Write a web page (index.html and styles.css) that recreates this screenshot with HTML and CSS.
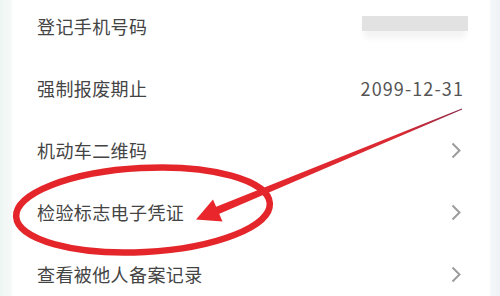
FILE: index.html
```html
<!DOCTYPE html>
<html lang="zh-CN">
<head>
  <meta charset="UTF-8" />
  <title>机动车信息</title>
  <link rel="stylesheet" href="styles.css">
</head>
<body>
  <div class="page">
    <div class="edge edge-left"></div>
    <div class="card">
      <ul class="list">
        <li class="row">
          <span class="label">登记手机号码</span>
          <span class="masked"></span>
        </li>
        <li class="row">
          <span class="label">强制报废期止</span>
          <span class="value">2099-12-31</span>
        </li>
        <li class="row">
          <span class="label">机动车二维码</span>
          <svg class="chevron" width="10" height="17" viewBox="0 0 10 17"><path d="M1.5 1.5 L8.5 8.5 L1.5 15.5" /></svg>
        </li>
        <li class="row">
          <span class="label">检验标志电子凭证</span>
          <svg class="chevron" width="10" height="17" viewBox="0 0 10 17"><path d="M1.5 1.5 L8.5 8.5 L1.5 15.5" /></svg>
        </li>
        <li class="row">
          <span class="label">查看被他人备案记录</span>
          <svg class="chevron" width="10" height="17" viewBox="0 0 10 17"><path d="M1.5 1.5 L8.5 8.5 L1.5 15.5" /></svg>
        </li>
      </ul>
    </div>
    <div class="edge edge-right"></div>

    <!-- 红色标注 -->
    <svg class="mark" width="500" height="296" viewBox="0 0 500 296">
      <defs>
        <linearGradient id="shaft" x1="216" y1="211" x2="462" y2="109" gradientUnits="userSpaceOnUse">
          <stop offset="0" stop-color="#e8262b" />
          <stop offset="0.75" stop-color="#d92a33" />
          <stop offset="1" stop-color="#8a2c4a" />
        </linearGradient>
      </defs>
      <ellipse cx="143" cy="210" rx="127" ry="42" transform="rotate(-3 143 210)"
               fill="none" stroke="#e4262b" stroke-width="6.5" />
      <polygon points="214.3,207.5 461.8,108.5 462.2,109.5 217.7,214.5" fill="url(#shaft)" />
      <polygon points="196,219.5 213,199.5 222.5,221.5" fill="#e8262b" />
    </svg>
  </div>
</body>
</html>
```

FILE: styles.css
```css
body { margin: 0; font-family: "Noto Sans CJK SC", "Noto Sans", sans-serif; background: #fff; }
.page { position: relative; display: flex; width: 500px; height: 296px; overflow: hidden; }
.edge { flex: none; }
.edge-left { width: 12px; background: linear-gradient(90deg, #eef6f3, #f6faf9); }
.edge-right { width: 10px; background: linear-gradient(90deg, #f5f8fa, #eff3f6); }
.card { flex: 1; background: #fff; padding: 0 27px 0 25px; }
.list { list-style: none; margin: -5px 0 0; padding: 0; }
.row {
    display: flex;
    align-items: center;
    justify-content: space-between;
    height: 62px;
  }
.label { font-size: 18px; color: #444; letter-spacing: 0.4px; }
.value { font-size: 18px; color: #555; letter-spacing: 1.1px; margin-right: -1px; }
.masked {
    width: 106px;
    height: 15px;
    margin-top: -5px;
    margin-right: -5px;
    background: #e2e2e2;
    box-shadow: 0 9px 6px -2px #f3f3f3;
    filter: blur(0.6px);
  }
.chevron { margin-right: 2px; }
.chevron path { fill: none; stroke: #9c9c9c; stroke-width: 2; }
.mark { position: absolute; left: 0; top: 0; pointer-events: none; }
```
